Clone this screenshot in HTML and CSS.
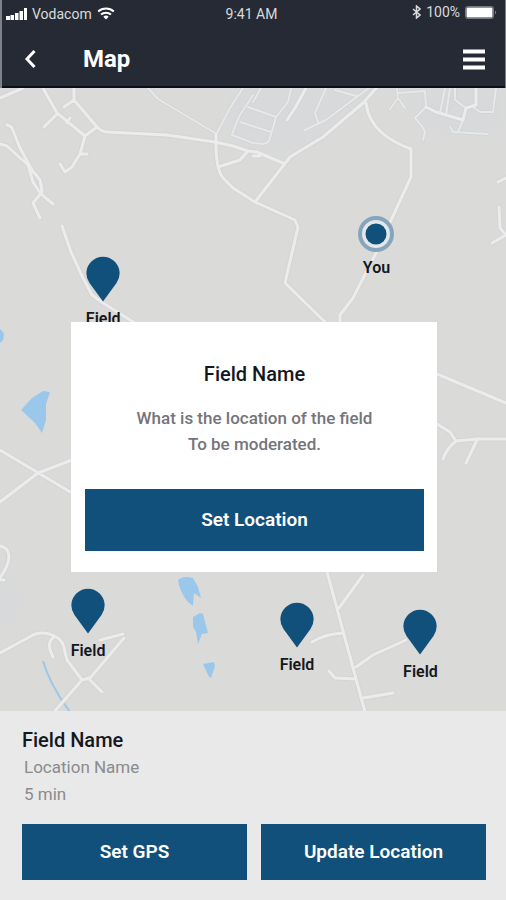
FILE: index.html
```html
<!DOCTYPE html>
<html lang="en">
<head>
<meta charset="utf-8">
<meta name="viewport" content="width=device-width, initial-scale=1">
<title>Map</title>
<link rel="stylesheet" href="styles.css">
</head>
<body>
<header class="top">
  <div class="status">
    <div class="status-left">
      <svg class="signal" viewBox="0 0 21 12" aria-hidden="true"><path d="M0 8h4v4H0zM4.500 7h3.500v5h-3.500zM9 5h3.500v7H9zM13.500 3h3.500v9h-3.500zM18 0h3v12h-3z"/></svg>
      <span>Vodacom</span>
      <svg class="wifi" viewBox="0 0 18 13" aria-hidden="true"><path d="M1.200 4.600a11.500 11.500 0 0 1 15.600 0M4 7.600a7.500 7.500 0 0 1 10 0"/><path class="solid" d="M6.300 9.700a4 4 0 0 1 5.400 0L9 12.600z"/></svg>
    </div>
    <span class="clock">9:41 AM</span>
    <div class="status-right">
      <svg class="bluetooth" viewBox="0 0 9 14" aria-hidden="true"><path d="M1 4l7 6-3.500 3V1L8 4l-7 6"/></svg>
      <span>100%</span>
      <svg class="battery" viewBox="0 0 32 13" aria-hidden="true"><rect class="case" x=".5" y=".5" width="28" height="12" rx="2"/><rect class="charge" x="1.500" y="1.500" width="26" height="10" rx="1"/><path class="case" d="M30.500 5v3"/></svg>
    </div>
  </div>
  <nav class="bar">
    <button class="icon-btn" aria-label="Back"><svg class="back" viewBox="0 0 14 20" aria-hidden="true"><path d="M11.500 2L4 10l7.500 8"/></svg></button>
    <h1>Map</h1>
    <button class="icon-btn menu-btn" aria-label="Menu"><svg class="menu" viewBox="0 0 22 21" aria-hidden="true"><path d="M0 2.500h22M0 10.500h22M0 18.500h22"/></svg></button>
  </nav>
</header>

<main class="map">
  <svg class="terrain" viewBox="0 88 506 623" preserveAspectRatio="xMidYMin slice" aria-hidden="true">
    <defs>
      <filter id="soft"><feGaussianBlur stdDeviation="6"/></filter>
      <path id="marker" d="M17 45.500L3.500 27A16.600 16.600 0 1 1 30.500 27z"/>
    </defs>
    <g class="town" filter="url(#soft)">
      <path d="M236 84h136l-12 18-40 34-34 18-50-10-8-12zM395 84h111v48l-45 5-40-8z"/>
      <ellipse cx="2" cy="600" rx="20" ry="28"/>
    </g>
    <g class="water">
      <path d="M0 329q4 3 4 7l-1 4-3 3zM43 391l7 1-4 12v16l-4 13-7-10-14-13 11-12zM178 580q5-5 15-2l5 9 3 11-7-5-1 13-6-5q-8-11-9-21zM193 617l7-4 3 1 5 19-6 1-4 10-2-12-3-5zM203 664l11-2 1 4-4 12-2-1z"/>
      <path class="stream" d="M43 661q7 24 27 51"/>
    </g>
    <g class="lane edge">
      <path id="lanes" d="M148 88l10 11 57 34M243 88l-13 20-14 27M253 95l-13 20q-6 13-8 20l21 8 10 1q6-1 7-6l6-21 12-15 3-13M248 107l28 10M240 122l31 10M253 102l8-14M326 88l-11 25 3 9M305 130l21-10 24-18 19-14M335 90l21 6M398 93l27-2 1 16-11 11q9 10 10 14l-2 8M397 88l1 10-8 11M398 98l7 10M440 113l5-25M446 115l4-27M455 88v12l11 8M473 107l7 5h13l3-24M450 127l3 5 35 2M463 120l-5 12"/>
    </g>
    <g class="road edge">
      <path id="roads" d="M0 98l23-10M43 88l14 25 28 23-5 18-8 13-7 5-5-8M44 127l13-13M67 123l3-5M80 154h7M74 88v12l23 27q5 5 10 5l60 3 48 7 18 4 15 5 9 1 28 12M64 107l10-7M85 136l12-9M216 135q-1 33 7 43l10 10 22 14M218 167l22-7 7-8M253 156h7M7 125q4 1 5 3l8 20 12 22 8 10 2 12-9 11 7 15M0 144l7 2 21 19 5 17 7 11 13 11M33 172q9 6 9 20M62 226l9 26 12 26 9 17 11 8 32 20M306 88l-11 20-8 12M380 84l-17 19-40 34-33 20-35 45 40 18 3 7-13 56 40 39M366 103q2 17 15 29 11 10 30 17v28l-36 78-22 43-13 17v7M426 107l10 5 27 8 3-12 10-3V88M498 182l8-4M499 207l1 21 6 7-14 8M0 450l72 43M0 502l38-29 34-13M0 546q8 1 9 10 0 9-9 22M437 374l69 29M437 424l13 8 6 9 21-2h29M456 441q-9 7-13 18M477 440l-11 23M0 653l33-18q12-5 25 3 6 5 7 14l2 8 15 20M54 712l28-32 8-2 34-40M88 678l14 14M53 638q-7 5 0 19M100 640l23-6M326 568l39 144M363 575l-24 33M312 642q13-8 31-9M356 667l17-12 33-15M329 671l6 7 21 1M363 698l30-5M0 580h4"/>
    </g>
    <use class="lane" href="#lanes"/>
    <use class="road" href="#roads"/>
  </svg>

  <div class="pin pin-a"><svg viewBox="0 0 34 46" aria-hidden="true"><use href="#marker"/></svg><span>Field</span></div>
  <div class="pin pin-b"><svg viewBox="0 0 34 46" aria-hidden="true"><use href="#marker"/></svg><span>Field</span></div>
  <div class="pin pin-c"><svg viewBox="0 0 34 46" aria-hidden="true"><use href="#marker"/></svg><span>Field</span></div>
  <div class="pin pin-d"><svg viewBox="0 0 34 46" aria-hidden="true"><use href="#marker"/></svg><span>Field</span></div>
  <div class="pin you"><svg viewBox="0 0 36 36" aria-hidden="true"><circle class="ring" cx="18" cy="18" r="16"/><circle cx="18" cy="18" r="10.500"/></svg><span>You</span></div>

  <section class="dialog" role="dialog" aria-labelledby="dialog-title">
    <h2 id="dialog-title">Field Name</h2>
    <p>What is the location of the field<br>To be moderated.</p>
    <button class="btn">Set Location</button>
  </section>
</main>

<footer class="sheet">
  <h2>Field Name</h2>
  <p>Location Name</p>
  <p>5 min</p>
  <div class="actions">
    <button class="btn">Set GPS</button>
    <button class="btn">Update Location</button>
  </div>
</footer>
</body>
</html>
```
FILE: styles.css
```css
* { box-sizing: border-box; }

body {
  margin: 0;
  min-height: 100vh;
  display: flex;
  flex-direction: column;
  font-family: Roboto, "Liberation Sans", sans-serif;
  color: #15171f;
  background: #e9e9e9;
}

h1, h2, p { margin: 0; }
svg { display: block; }
button { border: 0; padding: 0; font: inherit; cursor: pointer; }

.top {
  color: #fff;
  background: #262a34;
  border: solid #7d8188;
  border-width: 0 1px 0 2px;
}

.status {
  display: grid;
  grid-template-columns: 1fr auto 1fr;
  align-items: center;
  height: 28px;
  padding: 0 8px 0 4px;
  font-size: 14px;
  color: #d9dadd;
}
.status-left, .status-right { display: flex; align-items: center; gap: 5px; }
.status-left { padding-bottom: 1px; }
.status-right { justify-content: flex-end; padding-bottom: 4px; }
.signal { width: 21px; height: 12px; fill: #fff; }
.wifi { width: 18px; height: 13px; fill: none; stroke: #fff; stroke-width: 2; }
.wifi .solid { fill: #fff; stroke: none; }
.bluetooth { width: 9px; height: 14px; fill: none; stroke: #d9dadd; stroke-width: 1.5; }
.battery { width: 32px; height: 13px; }
.case { fill: none; stroke: #777b83; }
.charge { fill: #fff; }

.bar {
  display: flex;
  align-items: center;
  height: 60px;
  padding: 4px 20px 0 21px;
  border-bottom: 2px solid #0b0e16;
}
.bar h1 { margin-left: 46px; font-size: 24px; line-height: 28px; font-weight: 700; }
.icon-btn { background: none; }
.back { width: 14px; height: 20px; fill: none; stroke: #fff; stroke-width: 3; }
.menu { width: 22px; height: 21px; stroke: #fff; stroke-width: 4; }
.menu-btn { margin-left: auto; }

.map { position: relative; flex: 1; min-height: 520px; overflow: hidden; background: #dadad9; }
.terrain { position: absolute; width: 100%; height: 100%; }
.town { fill: #d7d9db; opacity: 0.6; }
.water { fill: #9bc8ea; }
.stream { fill: none; stroke: #9bc8ea; stroke-width: 2; }
.road, .lane { fill: none; stroke: #ececec; stroke-width: 3; stroke-linejoin: round; stroke-linecap: round; }
.lane { stroke: #e6e8e9; stroke-width: 2; }
.road.edge { stroke: #d0d1d2; stroke-width: 5; opacity: 0.6; }
.lane.edge { stroke: #cdd0d3; stroke-width: 3.5; opacity: 0.6; }

.pin {
  position: absolute;
  width: 60px;
  margin-left: -30px;
  display: flex;
  flex-direction: column;
  align-items: center;
  gap: 7px;
  font-size: 16px;
  line-height: 20px;
  font-weight: 600;
}
.pin svg { width: 34px; height: 46px; fill: #10507a; }
.pin-a { left: 20.4%; top: 27%; }
.pin-b { left: 17.4%; top: 80.2%; }
.pin-c { left: 58.7%; top: 82.5%; }
.pin-d { left: 83.1%; top: 83.7%; }
.you { left: 74.4%; top: 20.5%; gap: 6px; }
.pin.you svg { width: 36px; height: 36px; }
.ring { fill: #e3e7eb; stroke: #86a4bb; stroke-width: 4; }

.dialog {
  position: absolute;
  top: 37.6%;
  left: 14%;
  right: 13.6%;
  padding: 39px 13px 21px 14px;
  display: flex;
  flex-direction: column;
  background: #fff;
  text-align: center;
}
h2 { font-size: 20px; line-height: 26px; font-weight: 500; }
.dialog p {
  margin: 18px 0 32px;
  font-size: 17px;
  line-height: 26px;
  font-weight: 500;
  color: #74757a;
}
.btn {
  flex: 1;
  min-height: 56px;
  font-size: 19px;
  line-height: 24px;
  font-weight: 600;
  color: #fff;
  background: #10507a;
}
.dialog .btn { flex: none; min-height: 62px; }

.sheet { padding: 16px 20px 20px 22px; }
.sheet p { padding-left: 2px; font-size: 17px; line-height: 27px; color: #8a8b8e; }
.sheet h2 + p { margin-top: 1px; }
.actions { display: flex; gap: 14px; margin-top: 16px; }
```
